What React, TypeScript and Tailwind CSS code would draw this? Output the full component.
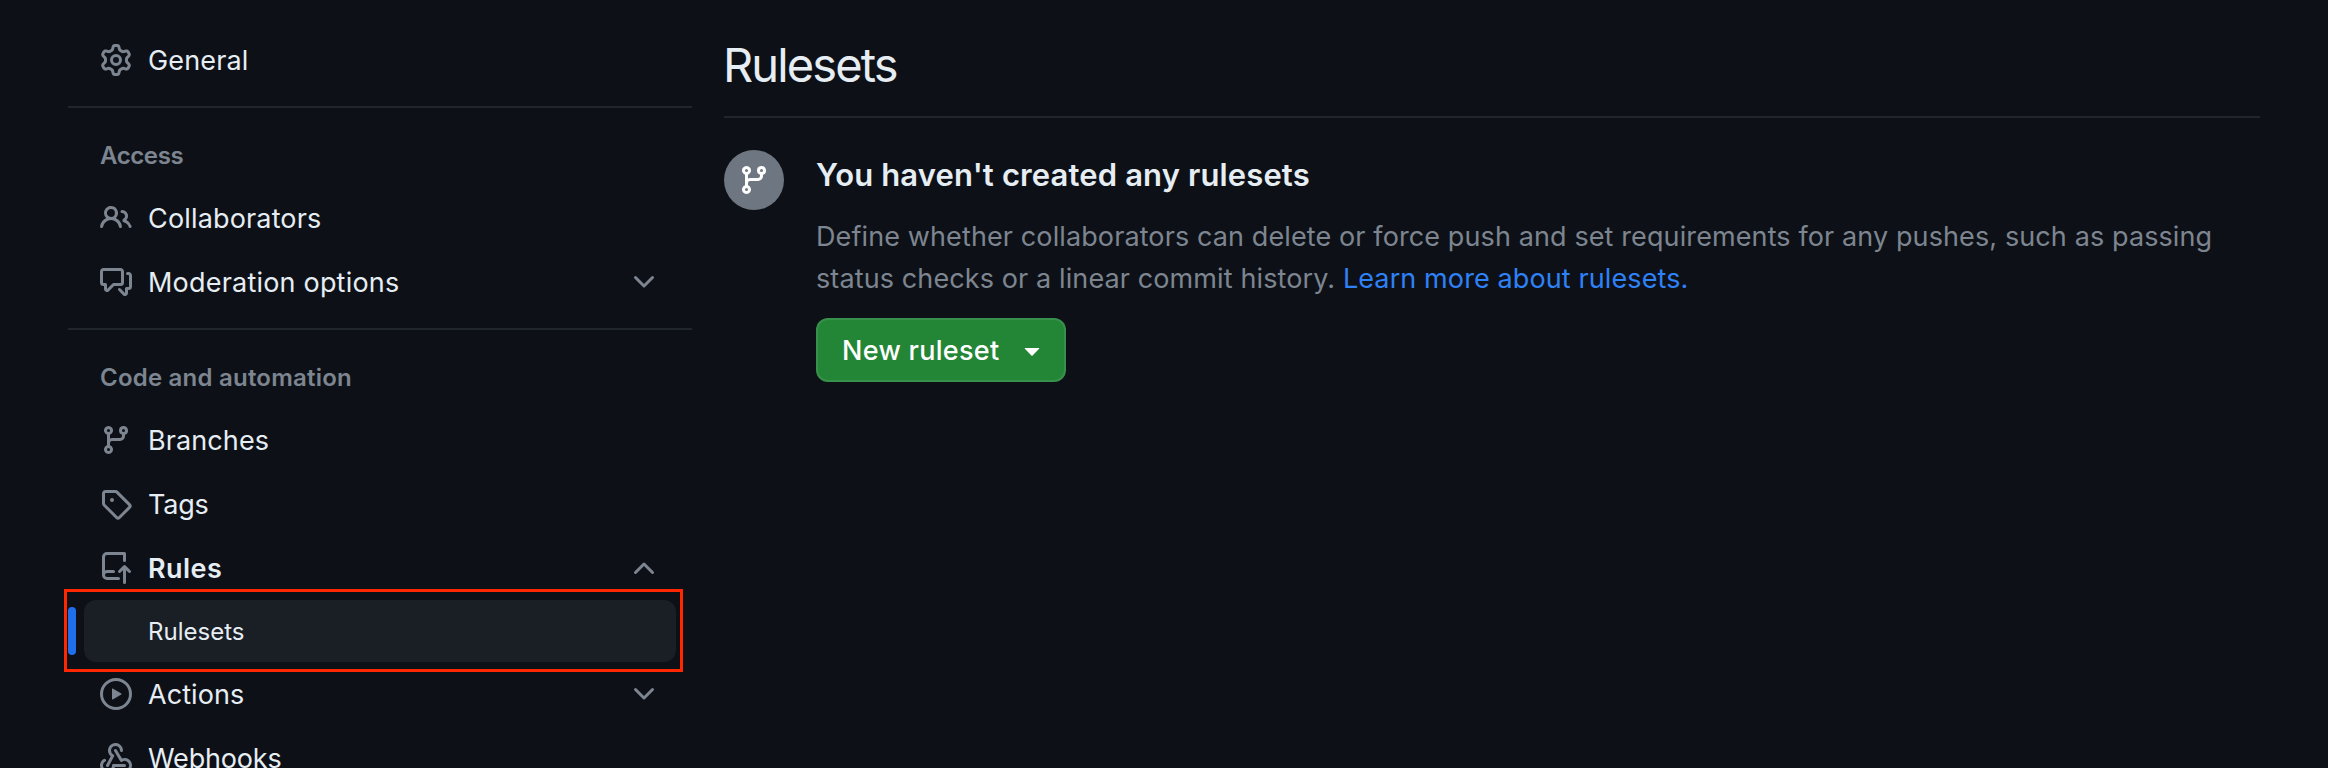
import type { ReactNode } from 'react';

const icons = {
  gear: [
    'M8 0a8.2 8.2 0 0 1 .701.031C9.444.095 9.99.645 10.16 1.29l.288 1.107c.018.066.079.158.212.224.231.114.454.243.668.386.123.082.233.09.299.071l1.103-.303c.644-.176 1.392.021 1.82.63.27.385.506.792.704 1.218.315.675.111 1.422-.364 1.891l-.814.806c-.049.048-.098.147-.088.294.016.257.016.515 0 .772-.01.147.038.246.088.294l.814.806c.475.469.679 1.216.364 1.891a7.977 7.977 0 0 1-.704 1.217c-.428.61-1.176.807-1.82.63l-1.102-.302c-.067-.019-.177-.011-.3.071a5.909 5.909 0 0 1-.668.386c-.133.066-.194.158-.211.224l-.29 1.106c-.168.646-.715 1.196-1.458 1.26a8.006 8.006 0 0 1-1.402 0c-.743-.064-1.289-.614-1.458-1.26l-.289-1.106c-.018-.066-.079-.158-.212-.224a5.738 5.738 0 0 1-.668-.386c-.123-.082-.233-.09-.299-.071l-1.103.303c-.644.176-1.392-.021-1.82-.63a8.12 8.12 0 0 1-.704-1.218c-.315-.675-.111-1.422.363-1.891l.815-.806c.05-.048.098-.147.088-.294a6.214 6.214 0 0 1 0-.772c.01-.147-.038-.246-.088-.294l-.815-.806C.635 6.045.431 5.298.746 4.623a7.92 7.92 0 0 1 .704-1.217c.428-.61 1.176-.807 1.82-.63l1.102.302c.067.019.177.011.3-.071.214-.143.437-.272.668-.386.133-.066.194-.158.211-.224l.29-1.106C6.009.645 6.556.095 7.299.03 7.53.01 7.764 0 8 0Zm-.571 1.525c-.036.003-.108.036-.137.146l-.289 1.105c-.147.561-.549.967-.998 1.189-.173.086-.34.183-.5.29-.417.278-.97.423-1.529.27l-1.103-.303c-.109-.03-.175.016-.195.045-.22.312-.412.644-.573.99-.014.031-.021.11.059.19l.815.806c.411.406.562.957.53 1.456a4.709 4.709 0 0 0 0 .582c.032.499-.119 1.05-.53 1.456l-.815.806c-.081.08-.073.159-.059.19.162.346.353.677.573.989.02.03.085.076.195.046l1.102-.303c.56-.153 1.113-.008 1.53.27.161.107.328.204.501.29.447.222.85.629.997 1.189l.289 1.105c.029.109.101.143.137.146a6.6 6.6 0 0 0 1.142 0c.036-.003.108-.036.137-.146l.289-1.105c.147-.561.549-.967.998-1.189.173-.086.34-.183.5-.29.417-.278.97-.423 1.529-.27l1.103.303c.109.029.175-.016.195-.045.22-.313.411-.644.573-.99.014-.031.021-.11-.059-.19l-.815-.806c-.411-.406-.562-.957-.53-1.456a4.709 4.709 0 0 0 0-.582c-.032-.499.119-1.05.53-1.456l.815-.806c.081-.08.073-.159.059-.19a6.464 6.464 0 0 0-.573-.989c-.02-.03-.085-.076-.195-.046l-1.102.303c-.56.153-1.113.008-1.53-.27a4.44 4.44 0 0 0-.501-.29c-.447-.222-.85-.629-.997-1.189l-.289-1.105c-.029-.11-.101-.143-.137-.146a6.6 6.6 0 0 0-1.142 0ZM11 8a3 3 0 1 1-6 0 3 3 0 0 1 6 0ZM9.5 8a1.5 1.5 0 1 0-3.001.001A1.5 1.5 0 0 0 9.5 8Z',
  ],
  people: [
    'M2 5.5a3.5 3.5 0 1 1 5.898 2.549 5.508 5.508 0 0 1 3.034 4.084.75.75 0 1 1-1.482.235 4 4 0 0 0-7.9 0 .75.75 0 0 1-1.482-.236A5.507 5.507 0 0 1 3.102 8.05 3.493 3.493 0 0 1 2 5.5ZM11 4a3.001 3.001 0 0 1 2.22 5.018 5.01 5.01 0 0 1 2.56 3.012.749.749 0 0 1-.885.954.752.752 0 0 1-.549-.514 3.507 3.507 0 0 0-2.522-2.372.75.75 0 0 1-.574-.73v-.352a.75.75 0 0 1 .416-.672A1.5 1.5 0 0 0 11 5.5.75.75 0 0 1 11 4Zm-5.5-.5a2 2 0 1 0-.001 3.999A2 2 0 0 0 5.5 3.5Z',
  ],
  discussion: [
    'M1.75 1h8.5c.966 0 1.75.784 1.75 1.75v5.5A1.75 1.75 0 0 1 10.25 10H7.061l-2.574 2.573A1.458 1.458 0 0 1 2 11.543V10h-.25A1.75 1.75 0 0 1 0 8.25v-5.5C0 1.784.784 1 1.75 1ZM1.5 2.75v5.5c0 .138.112.25.25.25h1a.75.75 0 0 1 .75.75v2.19l2.72-2.72a.749.749 0 0 1 .53-.22h3.5a.25.25 0 0 0 .25-.25v-5.5a.25.25 0 0 0-.25-.25h-8.5a.25.25 0 0 0-.25.25Zm13 2a.25.25 0 0 0-.25-.25h-.5a.75.75 0 0 1 0-1.5h.5c.966 0 1.75.784 1.75 1.75v5.5A1.75 1.75 0 0 1 14.25 12H14v1.543a1.458 1.458 0 0 1-2.487 1.03L9.22 12.28a.749.749 0 0 1 .326-1.275.749.749 0 0 1 .734.215l2.22 2.22v-2.19a.75.75 0 0 1 .75-.75h1a.25.25 0 0 0 .25-.25Z',
  ],
  branch: [
    'M9.5 3.25a2.25 2.25 0 1 1 3 2.122V6A2.5 2.5 0 0 1 10 8.5H6a1 1 0 0 0-1 1v1.128a2.251 2.251 0 1 1-1.5 0V5.372a2.25 2.25 0 1 1 1.5 0v1.836A2.493 2.493 0 0 1 6 7h4a1 1 0 0 0 1-1v-.628A2.25 2.25 0 0 1 9.5 3.25Zm-6 0a.75.75 0 1 0 1.5 0 .75.75 0 0 0-1.5 0Zm8.25-.75a.75.75 0 1 0 0 1.5.75.75 0 0 0 0-1.5ZM4.25 12a.75.75 0 1 0 0 1.5.75.75 0 0 0 0-1.5Z',
  ],
  tag: [
    'M1 7.775V2.75C1 1.784 1.784 1 2.75 1h5.025c.464 0 .91.184 1.238.513l6.25 6.25a1.75 1.75 0 0 1 0 2.474l-5.026 5.026a1.75 1.75 0 0 1-2.474 0l-6.25-6.25A1.752 1.752 0 0 1 1 7.775Zm1.5 0c0 .066.026.13.073.177l6.25 6.25a.25.25 0 0 0 .354 0l5.025-5.025a.25.25 0 0 0 0-.354l-6.25-6.25a.25.25 0 0 0-.177-.073H2.75a.25.25 0 0 0-.25.25ZM6 5a1 1 0 1 1 0 2 1 1 0 0 1 0-2Z',
  ],
  repoPush: [
    'M1 2.5A2.5 2.5 0 0 1 3.5 0h8.75a.75.75 0 0 1 .75.75v3.5a.75.75 0 0 1-1.5 0V1.5h-8a1 1 0 0 0-1 1v6.708A2.493 2.493 0 0 1 3.5 9h3.25a.75.75 0 0 1 0 1.5H3.5a1 1 0 0 0 0 2h5.75a.75.75 0 0 1 0 1.5H3.5A2.5 2.5 0 0 1 1 11.5Zm13.23 7.79-1.224-1.224v6.184a.75.75 0 0 1-1.5 0V9.066L10.28 10.29a.75.75 0 0 1-1.06-1.061l2.505-2.504a.75.75 0 0 1 1.06 0L15.29 9.23a.751.751 0 0 1-.018 1.042.751.751 0 0 1-1.042.018Z',
  ],
  play: [
    'M8 0a8 8 0 1 1 0 16A8 8 0 0 1 8 0ZM1.5 8a6.5 6.5 0 1 0 13 0 6.5 6.5 0 0 0-13 0Zm4.879-2.773 4.264 2.559a.25.25 0 0 1 0 .428l-4.264 2.559A.25.25 0 0 1 6 10.559V5.442a.25.25 0 0 1 .379-.215Z',
  ],
  webhook: [
    'M5.5 4.25a2.25 2.25 0 0 1 4.5 0 .75.75 0 0 0 1.5 0 3.75 3.75 0 1 0-6.14 2.889l-2.272 4.258a.75.75 0 0 0 1.324.706L7 7.25a.75.75 0 0 0-.309-1.015A2.25 2.25 0 0 1 5.5 4.25Z',
    'M7.364 3.607a.75.75 0 0 1 1.03.257l2.608 4.349a3.75 3.75 0 1 1-.628 6.785.75.75 0 0 1 .752-1.299 2.25 2.25 0 1 0-.033-3.88.75.75 0 0 1-1.03-.256L7.107 4.636a.75.75 0 0 1 .257-1.03Z',
    'M2.9 8.776A.75.75 0 0 1 2.625 9.8 2.25 2.25 0 1 0 6 11.75a.75.75 0 0 1 .75-.751h5.5a.75.75 0 0 1 0 1.5H7.425a3.751 3.751 0 1 1-5.55-3.998.75.75 0 0 1 1.024.274Z',
  ],
  chevronDown: [
    'M12.78 5.22a.749.749 0 0 1 0 1.06l-4.25 4.25a.749.749 0 0 1-1.06 0L3.22 6.28a.749.749 0 1 1 1.06-1.06L8 8.939l3.72-3.719a.749.749 0 0 1 1.06 0Z',
  ],
  chevronUp: [
    'M3.22 10.78a.749.749 0 0 1 0-1.06l4.25-4.25a.749.749 0 0 1 1.06 0l4.25 4.25a.749.749 0 1 1-1.06 1.06L8 7.061 4.28 10.78a.749.749 0 0 1-1.06 0Z',
  ],
  triangleDown: ['m4.427 7.427 3.396 3.396a.25.25 0 0 0 .354 0l3.396-3.396A.25.25 0 0 0 11.396 7H4.604a.25.25 0 0 0-.177.427Z'],
};

type IconName = keyof typeof icons;

function Icon({ name, className = '' }: { name: IconName; className?: string }) {
  return (
    <svg viewBox="0 0 16 16" fill="currentColor" aria-hidden="true" className={`size-8 shrink-0 ${className}`}>
      {icons[name].map((d) => (
        <path key={d} d={d} />
      ))}
    </svg>
  );
}

interface NavItemProps {
  icon: IconName;
  label: string;
  tracking?: string;
  trailing?: 'chevronDown' | 'chevronUp';
}

function NavItem({ icon, label, tracking = 'tracking-[0.16px]', trailing }: NavItemProps) {
  return (
    <li className="flex h-16 items-center gap-4 pr-8 pl-8 text-[27px] leading-10">
      <Icon name={icon} className="text-[#7d8590]" />
      <span className={`flex-1 pt-0.5 whitespace-nowrap ${tracking}`}>{label}</span>
      {trailing && <Icon name={trailing} className="text-[#7d8590]" />}
    </li>
  );
}

function NavGroup({ title, tracking, children }: { title: string; tracking: string; children: ReactNode }) {
  return (
    <section className="border-t-2 border-[#21262d]">
      <h2 className={`pt-[30px] pb-3 pl-8 text-[24px] leading-9 font-semibold text-[#7d8590] ${tracking}`}>{title}</h2>
      <ul>{children}</ul>
    </section>
  );
}

export default function App() {
  return (
    <div className="flex h-[768px] w-[2328px] overflow-hidden bg-[#0d1117] pr-[68px] pl-[68px] font-['Inter','Liberation_Sans',sans-serif] text-[#e6edf3]">
      <nav className="w-[624px] shrink-0 pt-7">
        <ul className="pb-[14px]">
          <NavItem icon="gear" label="General" tracking="tracking-[0.15px]" />
        </ul>

        <NavGroup title="Access" tracking="tracking-[-0.4px]">
          <NavItem icon="people" label="Collaborators" />
          <NavItem icon="discussion" label="Moderation options" tracking="tracking-[0.2px]" trailing="chevronDown" />
        </NavGroup>
        <div className="h-[14px]" />

        <NavGroup title="Code and automation" tracking="tracking-[0.22px]">
          <NavItem icon="branch" label="Branches" tracking="tracking-[0.1px]" />
          <NavItem icon="tag" label="Tags" tracking="tracking-[-0.2px]" />
          <NavItem icon="repoPush" label="Rules" tracking="font-semibold tracking-[0.45px]" trailing="chevronUp" />
          <li className="relative flex h-[62px] items-center px-4">
            <span className="absolute top-[7px] left-0 h-12 w-2 rounded-[4px] bg-[#1f6feb]" />
            <a className="flex h-full flex-1 items-center rounded-xl bg-[#1a1e25] pt-0.5 pl-16 text-[24px] leading-9 tracking-[0.02px]">
              Rulesets
            </a>
            <span className="absolute -top-[11px] -left-1 h-[83px] w-[619px] border-[3px] border-[#ff2600]" />
          </li>
          <NavItem icon="play" label="Actions" tracking="tracking-[0.07px]" trailing="chevronDown" />
          <NavItem icon="webhook" label="Webhooks" tracking="tracking-[-0.17px]" />
        </NavGroup>
      </nav>

      <main className="ml-8 flex-1">
        <h1 className="border-b-2 border-[#21262d] pt-[29px] pb-[15px] indent-[-1px] text-[47px] leading-[72px] font-normal tracking-[-1.9px]">
          Rulesets
        </h1>
        <div className="mt-8 flex items-start gap-8">
          <div className="flex size-[60px] shrink-0 items-center justify-center rounded-full bg-[#6e7681] text-white">
            <Icon name="branch" />
          </div>
          <div>
            <h3 className="pt-px text-[31px] leading-[48px] font-semibold tracking-[0.13px]">
              You haven't created any rulesets
            </h3>
            <p className="mt-[17px] text-[27px] leading-[42px] tracking-[0.11px] whitespace-nowrap text-[#7d8590]">
              Define whether collaborators can delete or force push and set requirements for any pushes, such as passing
              <br />
              status checks or a linear commit history. <a className="text-[#2f81f7]">Learn more about rulesets.</a>
            </p>
            <button className="mt-[18px] flex h-16 w-[250px] items-center justify-between rounded-xl border-2 border-[#f0f6fc]/10 bg-[#238636] pr-4 pl-6 text-[27px] font-medium tracking-[0.28px] text-white">
              <span className="pt-0.5 leading-10">New ruleset</span>
              <Icon name="triangleDown" />
            </button>
          </div>
        </div>
      </main>
    </div>
  );
}
